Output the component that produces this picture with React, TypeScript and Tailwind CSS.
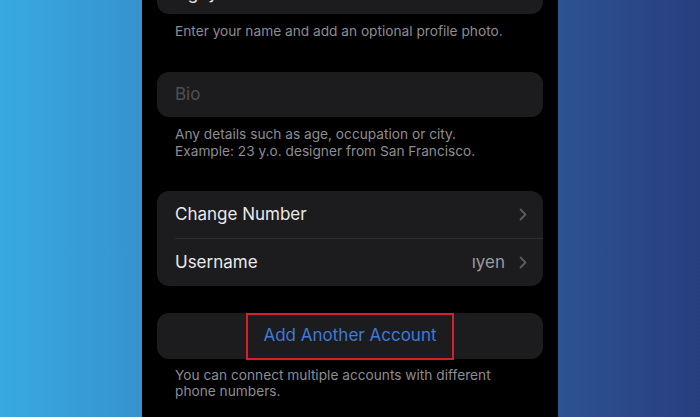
import React from 'react';

const Chevron: React.FC = () => (
    <svg width="8" height="13" viewBox="0 0 8 13" fill="none" className="shrink-0">
        <path d="M1.5 1.5 L6.5 6.5 L1.5 11.5" stroke="#5b5b5f" strokeWidth="1.8" strokeLinecap="round" strokeLinejoin="round" />
    </svg>
);

const App: React.FC = () => {
    return (
        <div className="w-[700px] h-[417px] overflow-hidden flex justify-center bg-gradient-to-r from-[#38a9e2] to-[#283e7f] font-['Inter','Noto_Sans',sans-serif]">
            <div className="w-[416px] h-full bg-black px-[15px] flex flex-col">
                {/* Name card, scrolled mostly off screen */}
                <div className="-mt-[31px] h-[45px] rounded-[12px] bg-[#1c1c1e] flex items-center px-[18px] overflow-hidden">
                    <span className="text-[17px] text-[#e4e4e6] mt-[4px]">Nguyen</span>
                </div>
                <p className="mt-[9px] px-[18px] text-[13.7px] leading-[17px] text-[#8d8d92]">
                    Enter your name and add an optional profile photo.
                </p>

                {/* Bio */}
                <div className="mt-[32px] h-[45px] rounded-[12px] bg-[#1c1c1e] flex items-center px-[18px]">
                    <span className="text-[17px] text-[#4f4f53]">Bio</span>
                </div>
                <p className="mt-[9px] px-[18px] text-[13.7px] leading-[17px] text-[#8d8d92]">
                    Any details such as age, occupation or city.<br />
                    Example: 23 y.o. designer from San Francisco.
                </p>

                {/* Settings rows */}
                <div className="mt-[31px] rounded-[12px] bg-[#1c1c1e] flex flex-col">
                    <div className="h-[47px] flex items-center justify-between pl-[18px] pr-[16px]">
                        <span className="text-[17px] text-[#e9e9eb]">Change Number</span>
                        <Chevron />
                    </div>
                    <div className="ml-[18px] h-px bg-[#2e2e31]" />
                    <div className="h-[47px] flex items-center justify-between pl-[18px] pr-[16px]">
                        <span className="text-[17px] text-[#e9e9eb]">Username</span>
                        <div className="flex items-center gap-[14px]">
                            <span className="text-[17px] text-[#9a9a9f]">ıyen</span>
                            <Chevron />
                        </div>
                    </div>
                </div>

                {/* Add account */}
                <div className="mt-[27px] h-[46px] rounded-[12px] bg-[#1c1c1e] flex items-center justify-center">
                    <span className="h-[47px] px-[15px] flex items-center border-2 border-[#d3202b] text-[17px] text-[#3f7ad6]">
                        Add Another Account
                    </span>
                </div>
                <p className="mt-[8px] px-[18px] text-[13.7px] leading-[16px] text-[#8d8d92]">
                    You can connect multiple accounts with different<br />
                    phone numbers.
                </p>
            </div>
        </div>
    );
};

export default App;
